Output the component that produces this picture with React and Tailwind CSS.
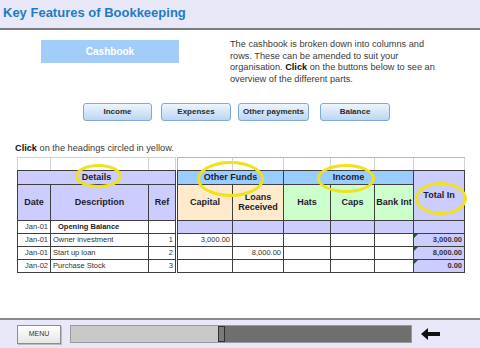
import React from 'react';

const font = { fontFamily: '"Liberation Sans", Arial, sans-serif' };

// cell styles
const cell = 'border-r border-b border-[#3f3f3f] flex items-center overflow-hidden whitespace-nowrap';
const head = cell + ' justify-center text-center font-bold text-[9px] leading-[10px] text-[#1c1c2c]';
const num = cell + ' justify-end pr-[2px] text-[7.5px] text-[#333]';

function Ring({ className }) {
  return <div className={'absolute rounded-[50%] border-[3px] border-[#f0e21c] pointer-events-none ' + className} />;
}

function Flag() {
  return (
    <span className="absolute left-0 top-0 w-0 h-0 border-t-[4px] border-t-[#1d5e2a] border-r-[4px] border-r-transparent" />
  );
}

function NavButton({ label, className }) {
  return (
    <button
      className={
        'h-[18px] rounded-[3px] border border-[#82a9d3] bg-gradient-to-b from-[#eef5fd] to-[#bcd6f3] text-[8px] font-bold text-[#2b2b2b] ' +
        className
      }
    >
      {label}
    </button>
  );
}

export default function App() {
  const leftRows = [
    ['Jan-01', 'Opening Balance', ''],
    ['Jan-01', 'Owner investment', '1'],
    ['Jan-01', 'Start up loan', '2'],
    ['Jan-02', 'Purchase Stock', '3'],
  ];
  const rightRows = [
    ['3,000.00', '', '3,000.00'],
    ['', '8,000.00', '8,000.00'],
    ['', '', '0.00'],
  ];

  return (
    <div className="relative w-[480px] h-[348px] flex flex-col bg-white overflow-hidden" style={font}>
      {/* Title bar */}
      <header className="h-[30px] shrink-0 bg-[#e8e8f9] border-b-2 border-[#7c7c7c] pl-[3px] pt-[5px]">
        <h1 className="text-[13px] leading-[15px] font-bold text-[#1f7cc4]">Key Features of Bookkeeping</h1>
      </header>

      <main className="flex-1 flex flex-col">
        {/* Intro */}
        <div className="flex items-start mt-[10px]">
          <div className="ml-[41px] w-[138px] h-[23px] bg-[#a2cdf8] flex items-center justify-center text-white font-bold text-[10px]">
            Cashbook
          </div>
          <p className="ml-[51px] -mt-[1px] text-[9.2px] leading-[11.7px] text-[#3a3a3a] whitespace-nowrap">
            The cashbook is broken down into columns and
            <br />
            rows. These can be amended to suit your
            <br />
            organisation. <b className="text-[#111]">Click</b> on the buttons below to see an
            <br />
            overview of the different parts.
          </p>
        </div>

        {/* Section buttons */}
        <div className="flex mt-[17px]">
          <NavButton label="Income" className="ml-[83px] w-[69px]" />
          <NavButton label="Expenses" className="ml-[9px] w-[70px]" />
          <NavButton label="Other payments" className="ml-[7px] w-[71px]" />
          <NavButton label="Balance" className="ml-[11px] w-[70px]" />
        </div>

        <p className="ml-[15px] mt-[21px] text-[9.2px] leading-[12px] text-[#3a3a3a]">
          <b className="text-[#111]">Click</b> on the headings circled in yellow.
        </p>

        {/* Cashbook sheet */}
        <div className="flex ml-[17px] mt-[3px]">
          {/* Details block */}
          <div>
            <div className="grid grid-cols-[33px_98px_27px] h-[13px] border-t border-l border-[#d2d2d2]">
              <div className="border-r border-[#d2d2d2]" />
              <div className="border-r border-[#d2d2d2]" />
              <div className="border-r border-[#d2d2d2]" />
            </div>
            <div className="grid grid-cols-[33px_98px_27px] grid-rows-[14px_36px_13px_13px_13px_13px] border-t border-l border-[#3f3f3f]">
              <div className={head + ' col-span-3 bg-[#ccccff]'}>Details</div>
              <div className={head + ' bg-[#ccccff]'}>Date</div>
              <div className={head + ' bg-[#ccccff]'}>Description</div>
              <div className={head + ' bg-[#ccccff]'}>Ref</div>
              {leftRows.map((r, i) => (
                <React.Fragment key={i}>
                  <div className={num}>{r[0]}</div>
                  {i === 0 ? (
                    <div className={cell + ' pl-[7px] text-[7.5px] font-bold text-[#222]'}>{r[1]}</div>
                  ) : (
                    <div className={cell + ' pl-[2px] text-[7.5px] text-[#333]'}>{r[1]}</div>
                  )}
                  <div className={num}>{r[2]}</div>
                </React.Fragment>
              ))}
            </div>
          </div>

          {/* Funds / income block */}
          <div className="ml-[1px]">
            <div className="grid grid-cols-[55px_51px_47px_44px_39px_51px] h-[13px] border-t border-l border-[#b5b5b5]">
              {[0, 1, 2, 3, 4, 5].map((k) => (
                <div key={k} className="border-r border-[#d2d2d2]" />
              ))}
            </div>
            <div className="grid grid-cols-[55px_51px_47px_44px_39px_51px] grid-rows-[14px_36px_13px_13px_13px_13px] border-t border-l border-[#3f3f3f]">
              <div className={head + ' col-span-2 bg-[#99ccff]'}>Other Funds</div>
              <div className={head + ' col-span-3 bg-[#99ccff]'}>Income</div>
              <div className={head + ' row-span-2 bg-[#ccccff]'}>Total In</div>
              <div className={head + ' bg-[#ffebcc]'}>Capital</div>
              <div className={head + ' bg-[#ffebcc]'}>
                Loans
                <br />
                Received
              </div>
              <div className={head + ' bg-[#ccffcc]'}>Hats</div>
              <div className={head + ' bg-[#ccffcc]'}>Caps</div>
              <div className={head + ' bg-[#ccffcc]'}>Bank Int</div>

              {[0, 1, 2, 3, 4, 5].map((k) => (
                <div key={k} className={cell + ' bg-[#ccccff]'} />
              ))}

              {rightRows.map((r, i) => (
                <React.Fragment key={i}>
                  <div className={num}>{r[0]}</div>
                  <div className={num}>{r[1]}</div>
                  <div className={num} />
                  <div className={num} />
                  <div className={num} />
                  <div className={num + ' relative bg-[#ccccff] font-bold text-[#222]'}>
                    <Flag />
                    {r[2]}
                  </div>
                </React.Fragment>
              ))}
            </div>
          </div>
        </div>
      </main>

      {/* Player bar */}
      <footer className="h-[30px] shrink-0 bg-[#e8e8f8] border-t-2 border-[#8a8a8a] flex items-center">
        <button className="ml-[17px] w-[44px] h-[19px] border border-[#8e8e8e] bg-gradient-to-b from-white to-[#e6e6e6] text-[7px] text-[#333] shadow-[1px_1px_0_#bdbdbd]">
          MENU
        </button>
        <div className="ml-[9px] w-[342px] h-[18px] flex border border-[#9a9a9a]">
          <div className="w-[147px] bg-[#c9c9c9]" />
          <div className="w-[7px] bg-[#7a7a7a] border border-[#303030]" />
          <div className="flex-1 bg-[#6f6f6f]" />
        </div>
        <svg className="ml-[9px]" width="20" height="12" viewBox="0 0 20 12">
          <path d="M0 6 L7 0 L7 4 L19 4 L19 8 L7 8 L7 12 Z" fill="#111" />
        </svg>
      </footer>

      {/* Highlight rings */}
      <Ring className="left-[75px] top-[164px] w-[47px] h-[24px]" />
      <Ring className="left-[197px] top-[161px] w-[67px] h-[36px]" />
      <Ring className="left-[317px] top-[164px] w-[58px] h-[29px]" />
      <Ring className="left-[415px] top-[182px] w-[52px] h-[33px]" />
    </div>
  );
}
